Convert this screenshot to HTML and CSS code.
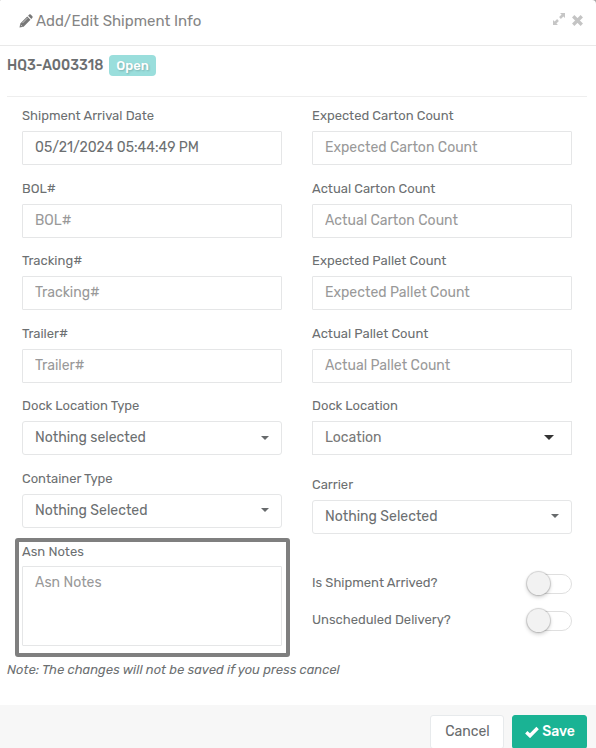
FILE: index.html
```html
<!DOCTYPE html>
<html lang="en">
<head>
    <meta charset="UTF-8">
    <meta name="viewport" content="width=device-width, initial-scale=1.0">
    <title>Add/Edit Shipment Info</title>
    <link rel="stylesheet" href="styles.css">
</head>
<body>
    <div class="modal">
        <div class="modal-header">
            <svg class="icon-pencil" viewBox="0 0 14 14"><path d="M0.5 13.5L1.3 9.4L8.2 2.5L11.5 5.8L4.6 12.7Z M9.1 1.7L10.2.6Q11 0 11.7.6L13.4 2.3Q14 3 13.4 3.8L12.3 4.9Z"/><path class="cut" d="M3.4 9.1L8.4 4.1M1.7 10.8L3.2 12.3"/></svg>
            <h4>Add/Edit Shipment Info</h4>
            <div class="tools">
                <svg class="icon-expand" viewBox="0 0 12 12"><path d="M7 0H12V5L10.4 3.4L7.9 5.9L6.1 4.1L8.6 1.6ZM0 7L1.6 8.6L4.1 6.1L5.9 7.9L3.4 10.4L5 12H0Z"/></svg>
                <svg class="icon-close" viewBox="0 0 10 10"><path d="M1.1 1.1L8.9 8.9M8.9 1.1L1.1 8.9"/></svg>
            </div>
        </div>
        <div class="modal-body">
            <div class="shipment">
                <strong>HQ3-A003318</strong>
                <span class="badge">Open</span>
            </div>
            <form id="shipment-form">
                <div class="column">
                    <div class="field">
                        <label for="arrival">Shipment Arrival Date</label>
                        <input type="text" id="arrival" value="05/21/2024 05:44:49 PM">
                    </div>
                    <div class="field">
                        <label for="bol">BOL#</label>
                        <input type="text" id="bol" placeholder="BOL#">
                    </div>
                    <div class="field">
                        <label for="tracking">Tracking#</label>
                        <input type="text" id="tracking" placeholder="Tracking#">
                    </div>
                    <div class="field">
                        <label for="trailer">Trailer#</label>
                        <input type="text" id="trailer" placeholder="Trailer#">
                    </div>
                    <div class="field">
                        <label>Dock Location Type</label>
                        <button type="button" class="select">Nothing selected<span class="caret"></span></button>
                    </div>
                    <div class="field">
                        <label>Container Type</label>
                        <button type="button" class="select">Nothing Selected<span class="caret"></span></button>
                    </div>
                    <div class="field notes">
                        <label for="notes">Asn Notes</label>
                        <textarea id="notes" placeholder="Asn Notes"></textarea>
                    </div>
                </div>
                <div class="column">
                    <div class="field">
                        <label for="expected-carton">Expected Carton Count</label>
                        <input type="text" id="expected-carton" placeholder="Expected Carton Count">
                    </div>
                    <div class="field">
                        <label for="actual-carton">Actual Carton Count</label>
                        <input type="text" id="actual-carton" placeholder="Actual Carton Count">
                    </div>
                    <div class="field">
                        <label for="expected-pallet">Expected Pallet Count</label>
                        <input type="text" id="expected-pallet" placeholder="Expected Pallet Count">
                    </div>
                    <div class="field">
                        <label for="actual-pallet">Actual Pallet Count</label>
                        <input type="text" id="actual-pallet" placeholder="Actual Pallet Count">
                    </div>
                    <div class="field">
                        <label>Dock Location</label>
                        <button type="button" class="select location">Location<span class="caret"></span></button>
                    </div>
                    <div class="field carrier">
                        <label>Carrier</label>
                        <button type="button" class="select">Nothing Selected<span class="caret"></span></button>
                    </div>
                    <div class="switch-row">
                        <span>Is Shipment Arrived?</span>
                        <span class="switch"></span>
                    </div>
                    <div class="switch-row">
                        <span>Unscheduled Delivery?</span>
                        <span class="switch"></span>
                    </div>
                </div>
            </form>
            <p class="note">Note: The changes will not be saved if you press cancel</p>
        </div>
        <div class="modal-footer">
            <button type="button" class="btn btn-cancel">Cancel</button>
            <button type="button" class="btn btn-save"><svg class="icon-check" viewBox="0 0 14 12"><path d="M1.3 6.3L5 9.8L12.6 2"/></svg>Save</button>
        </div>
    </div>
</body>
</html>
```

FILE: styles.css
```css
* {
    box-sizing: border-box;
}
body {
    margin: 0;
    height: 748px;
    overflow: hidden;
    background-color: #a5a5a5;
    font-family: Rubik, Roboto, sans-serif;
    font-size: 13px;
    color: #6c6f71;
}
.modal {
    height: 100%;
    display: flex;
    flex-direction: column;
    background-color: #fff;
    border-radius: 1px 4px 0 0;
}
.modal-header {
    flex-shrink: 0;
    display: flex;
    align-items: center;
    height: 46px;
    padding: 0 13px 4px 19px;
    border-bottom: 1px solid #e9e9e9;
}
.modal-header h4 {
    margin: 1px 0 0 3px;
    font-size: 15px;
    font-weight: 400;
    color: #858585;
}
.icon-pencil {
    width: 14px;
    height: 14px;
    fill: #777;
}
.icon-pencil .cut {
    stroke: #fff;
    stroke-width: 0.6;
    fill: none;
}
.tools {
    display: flex;
    gap: 7px;
    margin-left: auto;
}
.icon-expand {
    width: 12px;
    height: 12px;
    margin-top: -2px;
    fill: #c6c6c6;
}
.icon-close {
    width: 11px;
    height: 11px;
    stroke: #c4c4c4;
    stroke-width: 3;
}
.modal-body {
    flex-shrink: 0;
    height: 659px;
    padding: 0 9px 0 7px;
}
.shipment {
    display: flex;
    align-items: flex-start;
    height: 51px;
    padding-top: 9px;
    border-bottom: 1px solid #eee;
}
.shipment strong {
    width: 102px;
    font-size: 14px;
    font-weight: 500;
    line-height: 21px;
    white-space: nowrap;
}
.badge {
    width: 47px;
    height: 21px;
    border-radius: 4px;
    background-color: #9adedc;
    color: #fff;
    font-weight: 500;
    line-height: 22px;
    text-align: center;
    text-shadow: 1px 1px 2px rgba(0, 0, 0, 0.2);
}
#shipment-form {
    display: flex;
    gap: 30px;
    height: 563px;
    padding: 9px 15px 0;
}
.column {
    width: 260px;
}
.field {
    height: 72.55px;
}
.field label {
    display: block;
    height: 25px;
    line-height: 19px;
}
.field input,
.field textarea,
.select {
    display: block;
    width: 100%;
    height: 34px;
    margin: 0;
    padding: 0 12px 1px;
    border: 1px solid #e5e6e7;
    border-radius: 1px;
    background-color: #fff;
    font-family: inherit;
    font-size: 14px;
    color: inherit;
}
.field textarea {
    height: 80px;
    padding-top: 7px;
    resize: none;
}
::placeholder {
    color: #999;
    opacity: 1;
}
.select {
    display: flex;
    align-items: center;
    justify-content: space-between;
    border-radius: 3px;
}
.caret {
    border: 4px solid transparent;
    border-top-color: #676a6c;
    border-bottom: 0;
}
.location {
    padding-right: 17px;
    border-radius: 0;
    color: #777;
}
.location .caret {
    border-width: 5px 5px 0;
    border-top-color: #333;
}
.carrier {
    height: 66px;
    margin-top: 6px;
}
.notes {
    position: relative;
}
.notes label {
    padding-top: 1px;
}
/* highlight drawn around the notes field */
.notes::after {
    content: "";
    position: absolute;
    top: -3.5px;
    left: -7px;
    box-sizing: border-box;
    width: 275px;
    height: 119px;
    border: 4px solid #7f7f7f;
    border-radius: 3px;
    pointer-events: none;
}
.switch-row {
    display: flex;
    align-items: center;
    justify-content: space-between;
    height: 37px;
}
.switch-row span:first-child {
    margin-top: -4px;
}
.carrier + .switch-row {
    margin-top: 25px;
}
.switch {
    position: relative;
    width: 45px;
    height: 20px;
    border: 1px solid #dfdfdf;
    border-radius: 10px;
}
.switch::before {
    content: "";
    position: absolute;
    top: -3px;
    left: -1px;
    width: 23px;
    height: 23px;
    border-radius: 50%;
    background-color: #f2f2f2;
    box-shadow: 0 0 1px 1px rgba(0, 0, 0, 0.16), 0 2px 4px rgba(0, 0, 0, 0.2);
}
.note {
    margin: 0;
    line-height: 19px;
    font-style: italic;
}
.modal-footer {
    flex: 1;
    display: flex;
    justify-content: flex-end;
    gap: 8px;
    padding: 10px 9px 0 0;
    background-color: #f7f7f7;
}
.btn {
    flex-shrink: 0;
    height: 34px;
    padding: 0 0 1px 1px;
    border: 1px solid #e7eaec;
    border-radius: 3px;
    font-family: inherit;
    font-size: 14px;
}
.btn-cancel {
    width: 74px;
    background-color: #fff;
    color: #676a6c;
}
.btn-save {
    display: flex;
    align-items: center;
    justify-content: center;
    gap: 3px;
    width: 75px;
    border-color: #1ab394;
    background-color: #1ab394;
    color: #fff;
    font-weight: 500;
}
.icon-check {
    width: 14px;
    height: 12px;
    stroke: #fff;
    stroke-width: 3.4;
    fill: none;
}
```
